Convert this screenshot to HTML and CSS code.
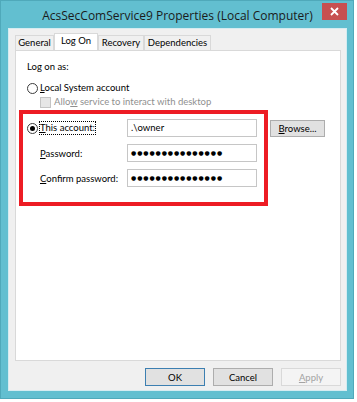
FILE: index.html
```html
<!DOCTYPE html>
<html>
  <head>
    <meta charset="UTF-8">
    <title>AcsSecComService9 Properties (Local Computer)</title>
    <link rel="stylesheet" href="styles.css">
  </head>
  <body>
    <div class="window">
      <div class="titlebar">
        <span></span>
        <div class="title">AcsSecComService9 Properties (Local Computer)</div>
        <div class="close">
          <svg width="9" height="9" viewBox="0 0 9 9">
            <path d="M1 1L8 8M8 1L1 8" stroke="#ffffff" stroke-width="1.8"/>
          </svg>
        </div>
      </div>
      <div class="client">
        <div class="tabs">
          <div class="tab tab-general">General</div>
          <div class="tab tab-logon active">Log On</div>
          <div class="tab tab-recovery">Recovery</div>
          <div class="tab tab-deps">Dependencies</div>
        </div>
        <div class="panel">
          <div class="line">Log on as:</div>
          <div class="line option">
            <span class="radio"></span>
            <span><u>L</u>ocal System account</span>
          </div>
          <div class="line check-row">
            <span class="checkbox"></span>
            <span class="disabled">Allo<u>w</u> service to interact with desktop</span>
          </div>
          <div class="account-grid">
            <div class="option">
              <span class="radio checked"></span>
              <span class="focus"><u>T</u>his account:</span>
            </div>
            <div class="field">.\owner</div>
            <button class="btn browse" type="button"><u>B</u>rowse...</button>

            <div class="sub-label"><u>P</u>assword:</div>
            <div class="field dots">&#9679;&#9679;&#9679;&#9679;&#9679;&#9679;&#9679;&#9679;&#9679;&#9679;&#9679;&#9679;&#9679;&#9679;&#9679;</div>
            <span></span>

            <div class="sub-label"><u>C</u>onfirm password:</div>
            <div class="field dots">&#9679;&#9679;&#9679;&#9679;&#9679;&#9679;&#9679;&#9679;&#9679;&#9679;&#9679;&#9679;&#9679;&#9679;&#9679;</div>
            <span></span>
          </div>
          <div class="highlight"></div>
        </div>
        <div class="buttons">
          <button class="btn default" type="button">OK</button>
          <button class="btn" type="button">Cancel</button>
          <button class="btn" type="button" disabled><u>A</u>pply</button>
        </div>
      </div>
    </div>
  </body>
</html>
```

FILE: styles.css
```css
body {
  margin: 0;
  background-color: #ffffff;
  font-family: Lato, "Open Sans", Arial, sans-serif;
  font-size: 9.5px;
  color: #000000;
}
.window {
  width: 354px;
  height: 399px;
  box-sizing: border-box;
  border: 1px solid #4fa9ba;
  background-color: #62bfd0;
  padding: 0 6px 7px 7px;
  display: flex;
  flex-direction: column;
}
.titlebar {
  height: 27px;
  display: grid;
  grid-template-columns: 1fr auto 1fr;
  align-items: center;
}
.title {
  font-family: "Open Sans", Arial, sans-serif;
  font-size: 12px;
  color: #1b1b1b;
  padding-top: 2px;
  white-space: nowrap;
}
.close {
  justify-self: end;
  align-self: start;
  margin-top: 2px;
  width: 25px;
  height: 17px;
  background-color: #c75050;
  display: flex;
  align-items: center;
  justify-content: center;
}
.client {
  flex: 1;
  border: 1px solid #d5ecf1;
  background-color: #f0f0f0;
  padding: 4px 5px 4px 6px;
  display: flex;
  flex-direction: column;
}
.tabs {
  display: flex;
  align-items: flex-end;
  height: 17px;
}
.tab {
  box-sizing: border-box;
  height: 15px;
  border: 1px solid #d9d9d9;
  border-bottom: none;
  background-color: #f0f0f0;
  text-align: center;
  line-height: 13px;
}
.tab-general { width: 39px; }
.tab-logon { width: 44px; }
.tab-recovery { width: 46px; }
.tab-deps { width: 67px; }
.tab.active {
  height: 18px;
  margin-bottom: -1px;
  background-color: #ffffff;
  position: relative;
  line-height: 14px;
}
.panel {
  flex: 1;
  position: relative;
  border: 1px solid #d9d9d9;
  background-color: #ffffff;
  padding: 9px 0 0 11px;
}
.line {
  height: 14px;
  line-height: 14px;
  display: flex;
  align-items: center;
}
.option {
  display: flex;
  align-items: center;
  gap: 2px;
}
.line.option {
  margin-top: 7px;
}
.check-row {
  padding-left: 13px;
  gap: 3px;
}
.radio {
  width: 11px;
  height: 11px;
  box-sizing: border-box;
  border: 1px solid #3c3c3c;
  border-radius: 50%;
  background-color: #ffffff;
  display: flex;
  align-items: center;
  justify-content: center;
}
.radio.checked::after {
  content: "";
  width: 5px;
  height: 5px;
  border-radius: 50%;
  background-color: #000000;
}
.checkbox {
  width: 11px;
  height: 11px;
  box-sizing: border-box;
  border: 1px solid #c4c4c4;
  background-color: #e6e6e6;
}
.disabled {
  color: #8f8f8f;
}
.focus {
  outline: 1px dotted #000000;
  line-height: 12px;
}
.account-grid {
  margin-top: 10px;
  display: grid;
  grid-template-columns: 87px 130px 55px;
  grid-auto-rows: 18px;
  column-gap: 13px;
  row-gap: 7px;
  align-items: center;
}
.sub-label {
  padding-left: 13px;
  white-space: nowrap;
}
.field {
  height: 18px;
  box-sizing: border-box;
  border: 1px solid #c6c6c6;
  background-color: #ffffff;
  padding-left: 3px;
  line-height: 16px;
}
.dots {
  font-family: "DejaVu Sans", sans-serif;
  font-size: 6px;
  letter-spacing: 0.9px;
}
.btn {
  width: 60px;
  height: 18px;
  box-sizing: border-box;
  border: 1px solid #adadad;
  background-color: #e1e1e1;
  font-family: Lato, "Open Sans", Arial, sans-serif;
  font-size: 9.5px;
  color: #000000;
  padding: 0;
}
.btn.browse {
  width: 55px;
  height: 17px;
  align-self: start;
  margin-top: 1px;
}
.btn.default {
  border-color: #3c7fb1;
}
.btn:disabled {
  border-color: #d9d9d9;
  background-color: #f4f4f4;
  color: #a3a3a3;
}
.buttons {
  margin-top: 7px;
  display: flex;
  justify-content: flex-end;
  gap: 8px;
}
.highlight {
  position: absolute;
  left: 3px;
  top: 59px;
  width: 249px;
  height: 96px;
  box-sizing: border-box;
  border: 4px solid #ed1c24;
}
```
